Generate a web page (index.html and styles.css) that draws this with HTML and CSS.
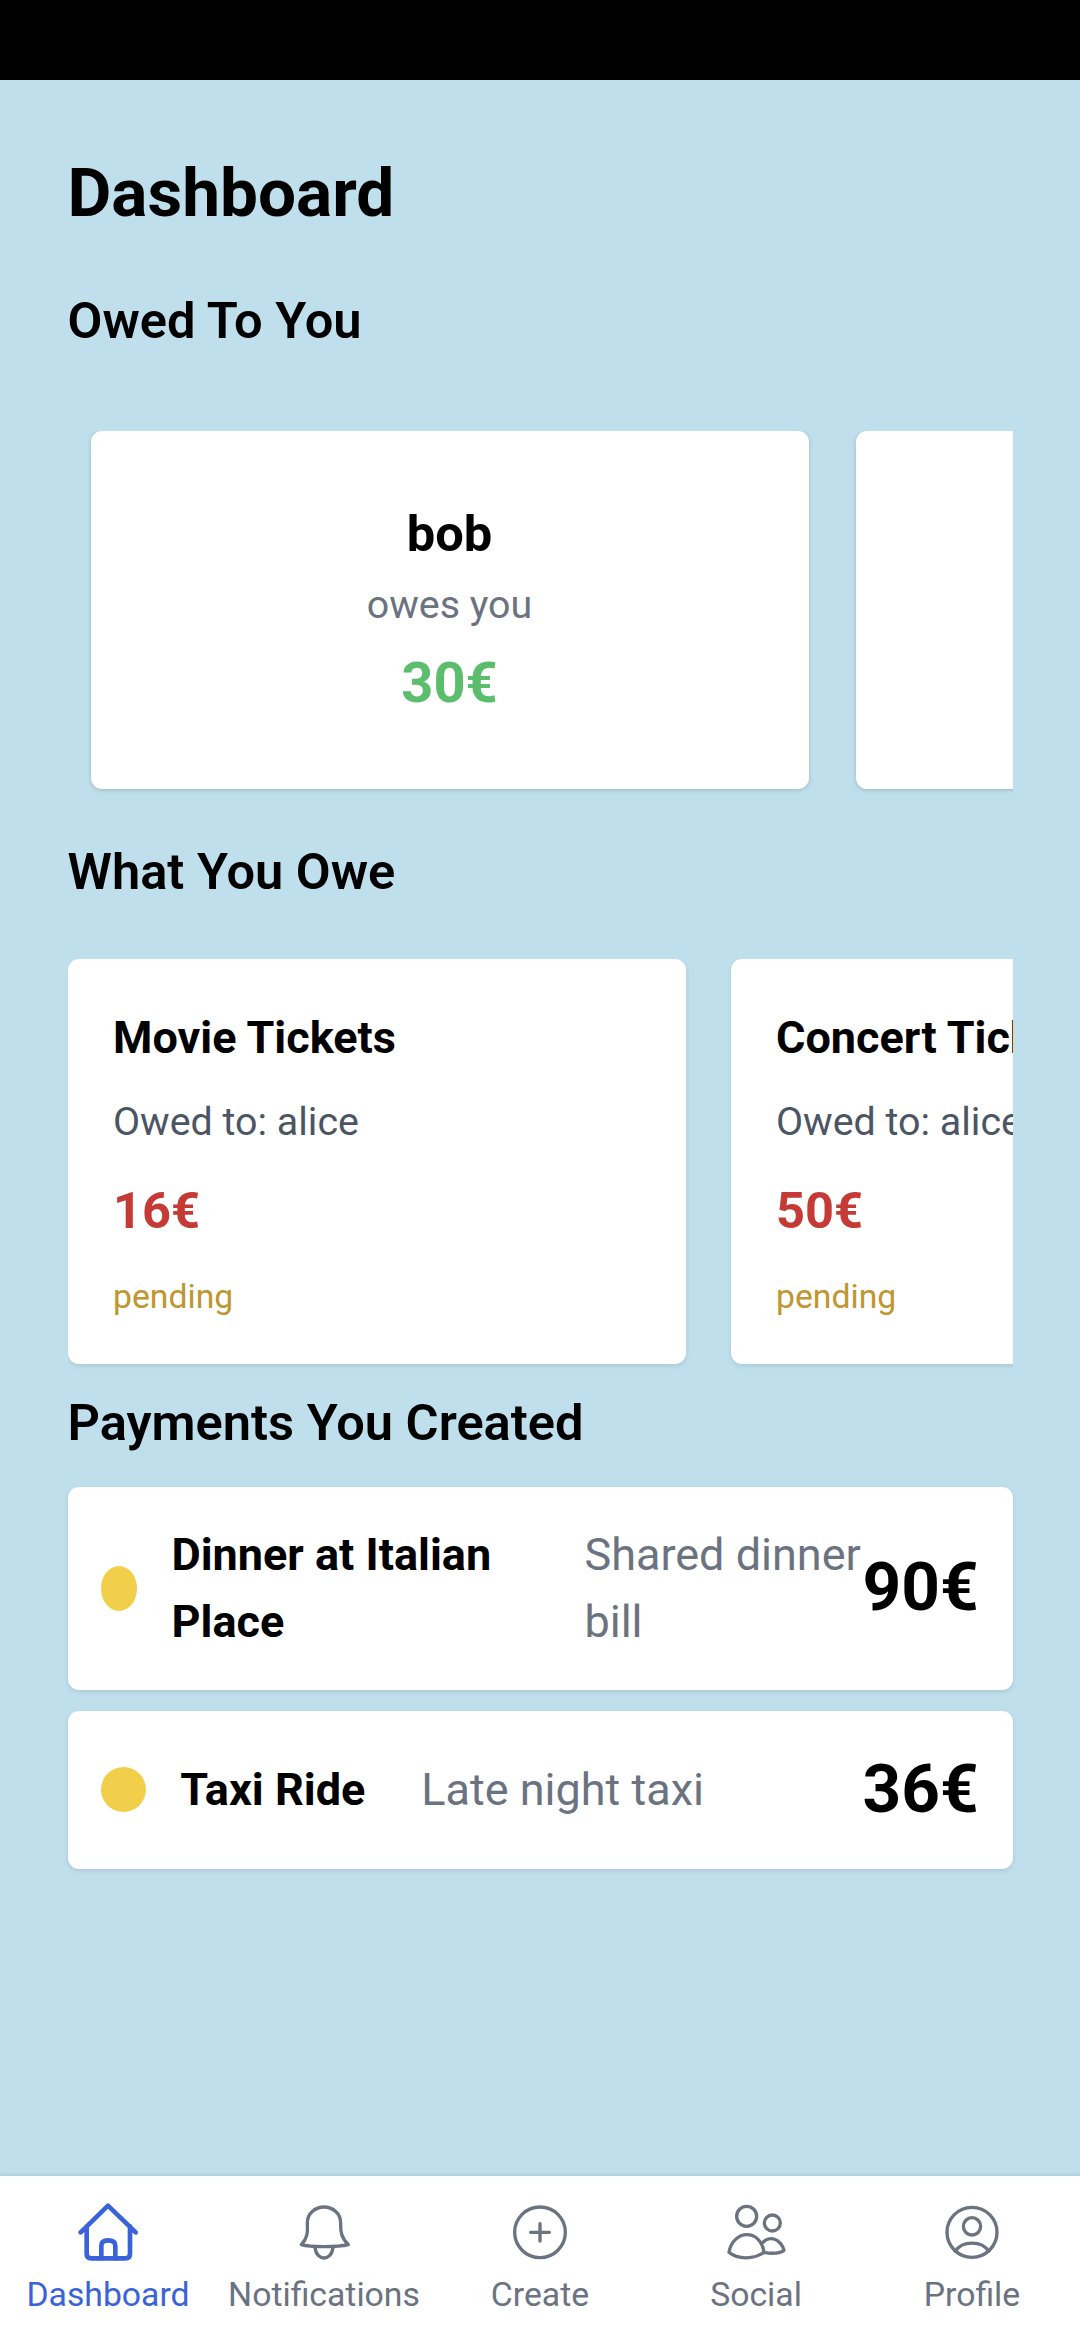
FILE: index.html
```html
<!DOCTYPE html>
<html lang="en">
    <head>
        <meta charset="UTF-8">
        <meta name="viewport" content="width=device-width, initial-scale=1.0">
        <title>Dashboard</title>
        <link rel="stylesheet" href="styles.css">
    </head>
    <body>
        <div class="status-bar"></div>
        <main class="content">
            <h1 class="page-title">Dashboard</h1>

            <h2 class="section-title owed-title">Owed To You</h2>
            <div class="scroller owed-list">
                <div class="owed-card">
                    <p class="owed-name">bob</p>
                    <p class="owed-label">owes you</p>
                    <p class="owed-amount">30€</p>
                </div>
                <div class="owed-card"></div>
            </div>

            <h2 class="section-title">What You Owe</h2>
            <div class="scroller debt-list">
                <div class="debt-card">
                    <p class="debt-title">Movie Tickets</p>
                    <p class="debt-to">Owed to: alice</p>
                    <p class="debt-amount">16€</p>
                    <p class="debt-status">pending</p>
                </div>
                <div class="debt-card">
                    <p class="debt-title">Concert Tickets</p>
                    <p class="debt-to">Owed to: alice</p>
                    <p class="debt-amount">50€</p>
                    <p class="debt-status">pending</p>
                </div>
            </div>

            <h2 class="section-title">Payments You Created</h2>
            <div class="payment">
                <span class="payment-dot"></span>
                <span class="payment-name">Dinner at Italian Place</span>
                <span class="payment-desc">Shared dinner bill</span>
                <span class="payment-amount">90€</span>
            </div>
            <div class="payment">
                <span class="payment-dot"></span>
                <span class="payment-name">Taxi Ride</span>
                <span class="payment-desc">Late night taxi</span>
                <span class="payment-amount">36€</span>
            </div>
        </main>

        <nav class="tabbar">
            <div class="tab active">
                <svg class="tab-icon" viewBox="82 70 180 180">
                    <path d="M90 158 L172 78 L255 158 M108 140 V222 Q108 236 122 236 H224 Q238 236 238 222 V140"/>
                    <path d="M152 236 V198 Q152 182 172 182 Q194 182 194 198 V236"/>
                </svg>
                <span class="tab-label">Dashboard</span>
            </div>
            <div class="tab">
                <svg class="tab-icon thin" viewBox="730 70 180 180">
                    <path d="M752 195 C775 170 770 150 770 130 C770 100 795 82 820 82 C845 82 870 100 870 130 C870 150 868 170 893 195 C860 203 780 203 752 195 Z"/>
                    <path d="M793 203 C795 225 808 235 820 235 C832 235 845 225 847 203"/>
                </svg>
                <span class="tab-label">Notifications</span>
            </div>
            <div class="tab">
                <svg class="tab-icon thin" viewBox="0 0 180 180">
                    <circle cx="90" cy="88" r="76"/>
                    <path d="M90 62 V114 M62 88 H118"/>
                </svg>
                <span class="tab-label">Create</span>
            </div>
            <div class="tab">
                <svg class="tab-icon thin" viewBox="136 70 180 180">
                    <circle cx="198" cy="110" r="30"/>
                    <circle cx="275" cy="130" r="24"/>
                    <path d="M145 218 C150 185 175 165 198 165 C225 165 245 185 250 218 C220 240 170 240 145 218 Z"/>
                    <path d="M245 190 C255 178 270 175 280 178 C295 182 308 200 310 212 C295 222 270 222 250 218"/>
                </svg>
                <span class="tab-label">Social</span>
            </div>
            <div class="tab">
                <svg class="tab-icon thin" viewBox="785 70 180 180">
                    <circle cx="875" cy="158" r="75"/>
                    <circle cx="875" cy="140" r="26"/>
                    <path d="M825 215 C845 182 905 182 925 215"/>
                </svg>
                <span class="tab-label">Profile</span>
            </div>
        </nav>
    </body>
</html>
```

FILE: styles.css
```css
* {
    box-sizing: border-box;
}

body {
    margin: 0;
    height: 2340px;
    display: flex;
    flex-direction: column;
    overflow: hidden;
    font-family: Roboto, "Noto Sans", sans-serif;
    background-color: #bfdfed;
    color: #000;
}

p, h1, h2 {
    margin: 0;
}

.status-bar {
    height: 80px;
    background-color: #000;
}

.content {
    flex: 1;
    padding: 68px 67.5px 0;
}

.page-title {
    font-size: 67.5px;
    line-height: 90px;
    font-weight: 700;
    margin-bottom: 44px;
}

.section-title {
    font-size: 50.6px;
    line-height: 78px;
    font-weight: 600;
}

.owed-title {
    margin-bottom: 71px;
}

.scroller {
    display: flex;
    overflow: hidden;
    padding-bottom: 6px;
}

.owed-list {
    gap: 47px;
    padding-left: 23px;
    margin-bottom: 38px;
}

.debt-list {
    gap: 45px;
    margin-top: 48px;
    margin-bottom: 14px;
}

.owed-card {
    flex: 0 0 718px;
    height: 358px;
    padding-top: 63px;
    text-align: center;
    background-color: #fff;
    border-radius: 11px;
    box-shadow: 0 1px 4px rgba(0, 0, 0, 0.18);
}

.owed-name {
    font-size: 50.6px;
    line-height: 79px;
    font-weight: 700;
}

.owed-label {
    font-size: 39.4px;
    line-height: 56px;
    margin-top: 4px;
    color: #6b7280;
}

.owed-amount {
    font-size: 56px;
    line-height: 79px;
    font-weight: 700;
    margin-top: 11px;
    color: #5cbd6d;
}

.debt-card {
    flex: 0 0 618px;
    height: 405px;
    padding: 45px 45.5px;
    white-space: nowrap;
    background-color: #fff;
    border-radius: 11px;
    box-shadow: 0 2px 4px rgba(0, 0, 0, 0.1);
}

.debt-title {
    font-size: 45px;
    line-height: 68px;
    font-weight: 700;
}

.debt-to {
    font-size: 39.4px;
    line-height: 56px;
    margin-top: 22px;
    color: #4b5563;
}

.debt-amount {
    font-size: 50.6px;
    line-height: 79px;
    font-weight: 700;
    margin-top: 21px;
    color: #c53a34;
}

.debt-status {
    font-size: 33.75px;
    line-height: 45px;
    margin-top: 24px;
    color: #bf962f;
}

.payment {
    display: flex;
    align-items: center;
    padding: 33.75px;
    margin-top: 21.5px;
    background-color: #fff;
    border-radius: 11px;
    box-shadow: 0 2px 4px rgba(0, 0, 0, 0.1);
}

.section-title + .payment {
    margin-top: 25px;
}

.payment-dot {
    width: 45px;
    height: 45px;
    margin-right: 34px;
    border-radius: 50%;
    background-color: #f2cf4a;
}

.payment-name {
    margin-right: 56px;
    font-size: 45px;
    line-height: 67.5px;
    font-weight: 700;
}

.payment-desc {
    font-size: 45px;
    line-height: 67.5px;
    color: #6b7280;
}

.payment-amount {
    margin-left: auto;
    padding-bottom: 3px;
    font-size: 67.5px;
    line-height: 87px;
    font-weight: 700;
}

.tabbar {
    display: grid;
    grid-template-columns: repeat(5, 1fr);
    height: 164px;
    padding-top: 27px;
    background-color: #fff;
    box-shadow: 0 -1px 4px rgba(0, 0, 0, 0.12);
}

.tab {
    display: flex;
    flex-direction: column;
    align-items: center;
    color: #6b7280;
}

.tab.active {
    color: #3b63d9;
}

.tab-icon {
    width: 60px;
    height: 60px;
    fill: none;
    stroke: currentColor;
    stroke-width: 14;
    stroke-linecap: round;
    stroke-linejoin: round;
}

.tab-icon.thin {
    stroke-width: 10;
}

.tab-label {
    font-size: 33.75px;
    line-height: 45px;
    margin-top: 9px;
}
```
